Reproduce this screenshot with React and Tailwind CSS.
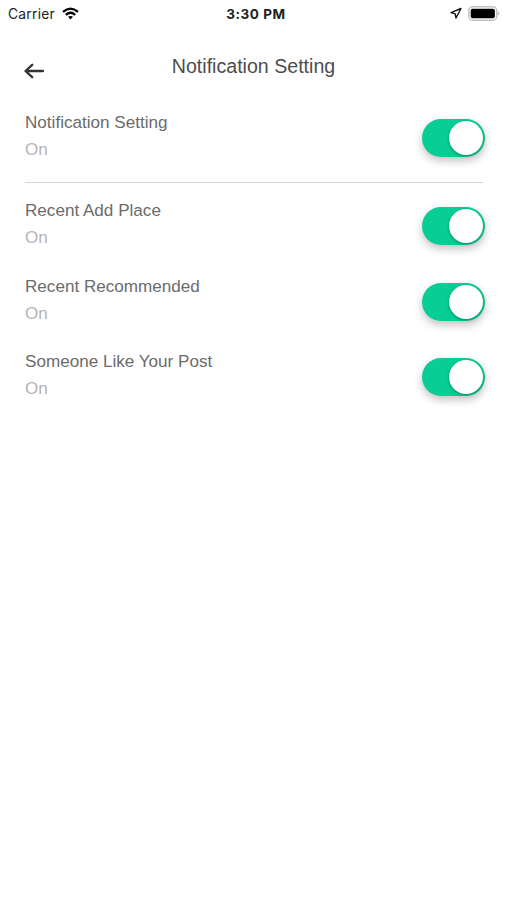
const settings = ['Recent Add Place', 'Recent Recommended', 'Someone Like Your Post'];

function StatusBar() {
  return (
    <div className="grid h-7 grid-cols-[1fr_auto_1fr] items-center pl-2 pr-[7px] font-['Inter',sans-serif] text-[#222]">
      <div className="flex items-center gap-[7px]">
        <span className="text-[13.8px] tracking-[0.25px]">Carrier</span>
        <svg className="-mt-[2px] h-[13px] w-[17px]" viewBox="0 0 17 13" fill="none" stroke="#000" strokeWidth="2.3">
          <path d="M1 4.9Q8.5-1.7 16 4.9" />
          <path d="M3.8 7.8Q8.5 3.8 13.2 7.8" />
          <path d="M6 9.8Q8.5 8 11 9.8L8.5 12.4Z" fill="#000" stroke="none" />
        </svg>
      </div>
      <span className="relative left-[2px] top-[0.5px] text-[13.5px] font-bold tracking-[0.55px]">3:30 PM</span>
      <div className="-mt-[2px] flex items-center justify-end gap-[6.5px]">
        <svg className="h-3 w-3" viewBox="0 0 12 12" fill="none" stroke="#111" strokeWidth="1.4" strokeLinejoin="round">
          <path d="M11 1.5L1 5.6L5.2 6.8L6 11Z" />
        </svg>
        <svg className="h-[15px] w-[32px]" viewBox="0 0 32 15">
          <rect x="0.8" y="0.8" width="28" height="13.4" rx="4" fill="#fff" stroke="#c2c2c2" strokeWidth="1.5" />
          <rect x="2.7" y="2.8" width="24.2" height="9.4" rx="2" fill="#000" />
          <path d="M30.2 5.2Q32.2 7.5 30.2 9.8Z" fill="#aaa" />
        </svg>
      </div>
    </div>
  );
}

function Toggle() {
  return (
    <button
      aria-label="Toggle"
      className="mt-[10px] flex h-[38px] w-[63px] items-center justify-end rounded-full bg-[#06ce95] pr-[2px] shadow-[0_4px_8px_rgba(0,0,0,0.24)]"
    >
      <span className="size-[34px] rounded-full bg-white shadow-[0_1px_3px_rgba(0,0,0,0.35)]" />
    </button>
  );
}

function SettingRow({ label }) {
  return (
    <div className="flex h-[54px] items-start justify-between pl-[25px] pr-[22px]">
      <div className="text-[17.1px] leading-[27px]">
        <div className="text-[#6b6b6b]">{label}</div>
        <div className="text-[#b5b5b5]">On</div>
      </div>
      <Toggle />
    </div>
  );
}

export default function App() {
  return (
    <div className="h-[900px] w-[507px] overflow-hidden bg-white font-['Liberation_Sans',Arial,sans-serif]">
      <StatusBar />
      <header className="grid h-[81px] grid-cols-[1fr_auto_1fr] items-start pt-[27px]">
        <svg
          className="ml-6 mt-[8px] h-4 w-5"
          viewBox="0 0 20 16"
          fill="none"
          stroke="#333"
          strokeWidth="2.3"
          strokeLinecap="round"
          strokeLinejoin="round"
        >
          <path d="M19 8H2M8.2 1.8L1.5 8L8.2 14.2" />
        </svg>
        <h1 className="text-[19.6px] leading-[23px] text-[#4d4d4d]">Notification Setting</h1>
      </header>
      <SettingRow label="Notification Setting" />
      <div className="ml-[25px] mr-6 mt-[19px] h-px bg-[#d5d5d5]" />
      <div className="mt-[14px] flex flex-col gap-[21.7px]">
        {settings.map((label) => (
          <SettingRow key={label} label={label} />
        ))}
      </div>
    </div>
  );
}
